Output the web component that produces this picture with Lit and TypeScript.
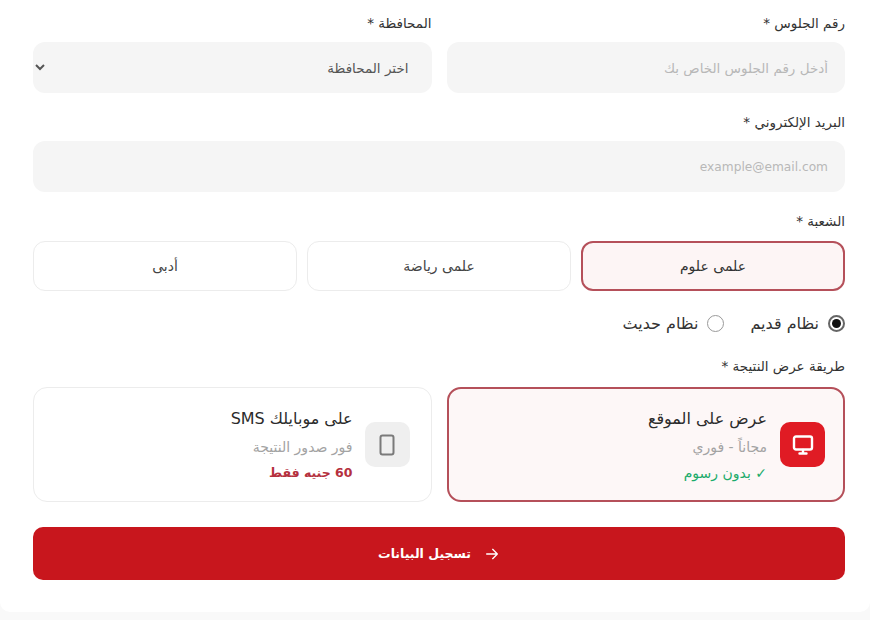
import { LitElement, html, css } from "lit";
import { customElement } from "lit/decorators.js";

@customElement("app-root")
export class AppRoot extends LitElement {
  static styles = css`
    :host {
      display: block;
      width: 870px;
      height: 620px;
      background: #f9f9f9;
      font-family: "DejaVu Sans", "Noto Sans", sans-serif;
      color: #2b2b2b;
      overflow: hidden;
    }
    .card {
      box-sizing: border-box;
      height: 612px;
      background: #fff;
      border-radius: 0 0 10px 10px;
      padding: 14px 25px 0 33px;
      direction: rtl;
      display: flex;
      flex-direction: column;
    }
    .row {
      display: grid;
      grid-template-columns: 1fr 1fr;
      gap: 15px;
    }
    .label {
      display: block;
      font-size: 13.5px;
      line-height: 18px;
      height: 18px;
      margin-bottom: 10px;
      color: #333;
    }
    .field { display: block; }
    .control {
      box-sizing: border-box;
      width: 100%;
      height: 51px;
      border: none;
      outline: none;
      border-radius: 12px;
      background: #f5f5f5;
      padding: 0 17px;
      font: inherit;
      font-size: 13.5px;
      color: #555;
      direction: rtl;
      display: block;
    }
    .control::placeholder { color: #b8b8b8; }
    .control[type="email"] { font-size: 12.2px; }
    select.control { padding: 0 19px 0 0; }
    .email { margin-top: 20px; }
    .branch-wrap { margin-top: 20px; }
    .branch-wrap .label { margin-bottom: 11px; }
    .branches {
      display: grid;
      grid-template-columns: repeat(3, 1fr);
      gap: 10px;
    }
    .branch {
      box-sizing: border-box;
      height: 50px;
      display: flex;
      align-items: center;
      justify-content: center;
      border: 1px solid #ececec;
      border-radius: 12px;
      background: #fff;
      font-size: 14px;
      color: #444;
    }
    .branch.on {
      border: 2px solid #b5505a;
      background: #fdf5f5;
      color: #333;
    }
    .radios {
      display: flex;
      gap: 26px;
      margin-top: 22px;
      height: 20px;
      align-items: center;
      font-size: 16px;
      color: #333;
    }
    .radio { display: flex; align-items: center; gap: 9px; }
    .dot {
      box-sizing: border-box;
      width: 17px;
      height: 17px;
      border-radius: 50%;
      border: 1px solid #9a9a9a;
      background: #fff;
      display: flex;
      align-items: center;
      justify-content: center;
    }
    .dot.on { border: 2px solid #666; }
    .dot.on::after {
      content: "";
      width: 9px;
      height: 9px;
      border-radius: 50%;
      background: #111;
    }
    .method-wrap { margin-top: 24px; }
    .method-wrap .label { margin-bottom: 12px; }
    .method {
      box-sizing: border-box;
      height: 115px;
      border: 1px solid #ececec;
      border-radius: 14px;
      background: #fff;
      display: flex;
      align-items: center;
      gap: 12px;
      padding: 0 21px;
    }
    .method.on {
      border: 2px solid #b5505a;
      background: #fdf7f7;
      gap: 13px;
      padding: 0 18px;
    }
    .icon {
      width: 45px;
      height: 45px;
      border-radius: 10px;
      background: #efefef;
      display: flex;
      align-items: center;
      justify-content: center;
      flex: none;
    }
    .on .icon { background: #e01b24; }
    .text { display: flex; flex-direction: column; gap: 7px; }
    .title { font-size: 16px; line-height: 22px; color: #2b2b2b; }
    .sub { font-size: 14px; line-height: 20px; color: #a3a3a3; }
    .free { font-size: 14px; line-height: 18px; color: #1cab6b; }
    .price { font-size: 12.5px; line-height: 18px; font-weight: 700; color: #b5303e; }
    .submit {
      box-sizing: border-box;
      margin-top: 25px;
      height: 53px;
      width: 100%;
      border: none;
      border-radius: 10px;
      background: #c8161d;
      color: #fff;
      font: inherit;
      font-size: 12.5px;
      font-weight: 700;
      display: flex;
      align-items: center;
      justify-content: center;
      gap: 13px;
    }
  `;

  render() {
    return html`
      <div class="card">
        <div class="row">
          <label class="field">
            <span class="label">رقم الجلوس *</span>
            <input class="control" placeholder="أدخل رقم الجلوس الخاص بك" />
          </label>
          <label class="field">
            <span class="label">المحافظة *</span>
            <select class="control"><option>اختر المحافظة</option></select>
          </label>
        </div>
        <label class="field email">
          <span class="label">البريد الإلكتروني *</span>
          <input class="control" type="email" placeholder="example@email.com" />
        </label>
        <div class="branch-wrap">
          <span class="label">الشعبة *</span>
          <div class="branches">
            <div class="branch on">علمى علوم</div>
            <div class="branch">علمى رياضة</div>
            <div class="branch">أدبى</div>
          </div>
        </div>
        <div class="radios">
          <div class="radio"><span class="dot on"></span>نظام قديم</div>
          <div class="radio"><span class="dot"></span>نظام حديث</div>
        </div>
        <div class="method-wrap">
          <span class="label">طريقة عرض النتيجة *</span>
          <div class="row">
            <div class="method on">
              <div class="icon">
                <svg width="24" height="24" viewBox="0 0 24 24" fill="none" stroke="#fff" stroke-width="2.4" stroke-linejoin="round" stroke-linecap="round">
                  <rect x="3" y="3.5" width="18" height="13" rx="2"></rect>
                  <path d="M12 17v3M8.5 20.5h7"></path>
                </svg>
              </div>
              <div class="text">
                <div class="title">عرض على الموقع</div>
                <div class="sub">مجاناً - فوري</div>
                <div class="free">✓ بدون رسوم</div>
              </div>
            </div>
            <div class="method">
              <div class="icon">
                <svg width="24" height="24" viewBox="0 0 24 24" fill="none" stroke="#7a7a7a" stroke-width="2" stroke-linejoin="round" stroke-linecap="round">
                  <rect x="5.5" y="2.5" width="13" height="19" rx="2"></rect>
                </svg>
              </div>
              <div class="text">
                <div class="title">على موبايلك SMS</div>
                <div class="sub">فور صدور النتيجة</div>
                <div class="price">60 جنيه فقط</div>
              </div>
            </div>
          </div>
        </div>
        <button class="submit">
          <svg width="16" height="16" viewBox="0 0 24 24" fill="none" stroke="#fff" stroke-width="2" stroke-linecap="round" stroke-linejoin="round">
            <path d="M4 12h16M13 5l7 7-7 7"></path>
          </svg>
          <span>تسجيل البيانات</span>
        </button>
      </div>
    `;
  }
}
